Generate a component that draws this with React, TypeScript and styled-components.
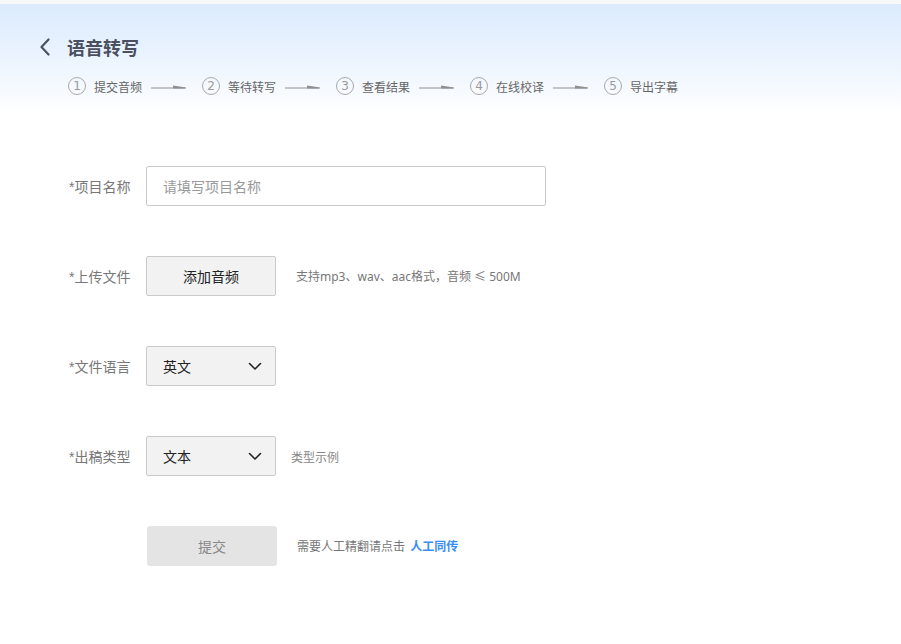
import styled, { createGlobalStyle } from "styled-components";
import { FC } from "react";

const GlobalStyle = createGlobalStyle`
  html, body {
    margin: 0;
    padding: 0;
    background: #fff;
    font-family: "Liberation Sans", "Noto Sans CJK SC", sans-serif;
  }
`;

const steps = ["提交音频", "等待转写", "查看结果", "在线校译", "导出字幕"];

const Chevron: FC = () => (
  <svg width="14" height="18" viewBox="0 0 14 18">
    <path d="M10.5 1.5 L3.5 9 L10.5 16.5" fill="none" stroke="#4b5262" strokeWidth="2.2" strokeLinecap="round" strokeLinejoin="round" />
  </svg>
);

const Arrow: FC = () => (
  <svg width="36" height="6" viewBox="0 0 36 6">
    <line x1="0" y1="4" x2="34" y2="4" stroke="#8f8f8f" strokeWidth="1.2" />
    <polygon points="22,1.6 35,3.6 35,4.4 22,4.4" fill="#8f8f8f" />
  </svg>
);

const DownArrow: FC = () => (
  <svg width="14" height="9" viewBox="0 0 14 9">
    <path d="M1.5 1.5 L7 7 L12.5 1.5" fill="none" stroke="#222" strokeWidth="1.6" strokeLinecap="round" strokeLinejoin="round" />
  </svg>
);

const App: FC = () => {
  return (
    <>
      <GlobalStyle />
      <Page>
        <TopStrip />
        <Header>
          <TitleRow>
            <BackBtn>
              <Chevron />
            </BackBtn>
            <Title>语音转写</Title>
          </TitleRow>
          <Steps>
            {steps.map((s, i) => (
              <Step key={s}>
                <StepNum>{i + 1}</StepNum>
                <StepText>{s}</StepText>
                {i < steps.length - 1 && (
                  <ArrowWrap>
                    <Arrow />
                  </ArrowWrap>
                )}
              </Step>
            ))}
          </Steps>
        </Header>

        <Form>
          <Row>
            <Label>*项目名称</Label>
            <TextInput placeholder="请填写项目名称" />
          </Row>
          <Row>
            <Label>*上传文件</Label>
            <GrayButton>添加音频</GrayButton>
            <Hint>支持mp3、wav、aac格式，音频 ≤ 500M</Hint>
          </Row>
          <Row>
            <Label>*文件语言</Label>
            <Select>
              <span>英文</span>
              <DownArrow />
            </Select>
          </Row>
          <Row>
            <Label>*出稿类型</Label>
            <Select>
              <span>文本</span>
              <DownArrow />
            </Select>
            <Example>类型示例</Example>
          </Row>
          <Row>
            <Label />
            <SubmitButton>提交</SubmitButton>
            <Hint $gap={20}>
              需要人工精翻请点击 <LinkText>人工同传</LinkText>
            </Hint>
          </Row>
        </Form>
      </Page>
    </>
  );
};

export default App;

const Page = styled.div`
  width: 901px;
  min-height: 644px;
  background: #fff;
`;

const TopStrip = styled.div`
  height: 4px;
  background: #f8f8f9;
`;

const Header = styled.div`
  height: 112px;
  padding: 32px 0 0 38px;
  box-sizing: border-box;
  background: linear-gradient(to bottom, #dbebfd 0%, #eaf3fe 45%, #ffffff 100%);
`;

const TitleRow = styled.div`
  display: flex;
  align-items: center;
  height: 22px;
`;

const BackBtn = styled.div`
  display: flex;
  align-items: center;
  width: 29px;
`;

const Title = styled.h1`
  margin: 0;
  font-size: 18px;
  font-weight: bold;
  color: #4a5060;
  font-family: "Noto Sans CJK SC", sans-serif;
  line-height: 22px;
`;

const Steps = styled.div`
  display: flex;
  align-items: center;
  margin: 18px 0 0 30px;
  height: 20px;
`;

const Step = styled.div`
  display: flex;
  align-items: center;
  width: 134px;
`;

const StepNum = styled.span`
  width: 16px;
  height: 16px;
  border: 1px solid #a9a9a9;
  border-radius: 50%;
  display: flex;
  align-items: center;
  justify-content: center;
  font-size: 12px;
  color: #9a9a9a;
  font-family: "DejaVu Sans", sans-serif;
  box-sizing: content-box;
`;

const StepText = styled.span`
  margin-left: 8px;
  font-size: 12px;
  color: #666;
  font-family: "Noto Sans CJK SC", sans-serif;
`;

const ArrowWrap = styled.span`
  display: flex;
  margin-left: 9px;
  margin-top: 1px;
`;

const Form = styled.div`
  padding: 50px 0 0 69px;
  display: flex;
  flex-direction: column;
  gap: 50px;
`;

const Row = styled.div`
  display: flex;
  align-items: center;
  height: 40px;
`;

const Label = styled.label`
  width: 77px;
  font-size: 14px;
  color: #777;
  font-family: "Liberation Sans", "Noto Sans CJK SC", sans-serif;
`;

const TextInput = styled.input`
  width: 400px;
  height: 40px;
  box-sizing: border-box;
  border: 1px solid #cacaca;
  border-radius: 2px;
  padding: 0 16px;
  font-size: 14px;
  font-family: "Noto Sans CJK SC", sans-serif;
  outline: none;
  &::placeholder {
    color: #999;
  }
`;

const GrayButton = styled.div`
  width: 130px;
  height: 40px;
  box-sizing: border-box;
  border: 1px solid #cacaca;
  border-radius: 2px;
  background: #f2f2f2;
  display: flex;
  align-items: center;
  justify-content: center;
  font-size: 14px;
  color: #222;
  font-family: "Noto Sans CJK SC", sans-serif;
`;

const Select = styled.div`
  width: 130px;
  height: 40px;
  box-sizing: border-box;
  border: 1px solid #cacaca;
  border-radius: 2px;
  background: #f2f2f2;
  display: flex;
  align-items: center;
  justify-content: space-between;
  padding: 0 13px 0 16px;
  font-size: 14px;
  color: #222;
  font-family: "Noto Sans CJK SC", sans-serif;
`;

const Hint = styled.span<{ $gap?: number }>`
  margin-left: ${(p) => p.$gap ?? 20}px;
  font-size: 12px;
  color: #777;
  font-family: "Noto Sans", "Noto Sans CJK SC", sans-serif;
`;

const Example = styled.span`
  margin-left: 15px;
  font-size: 12px;
  color: #888;
  font-family: "Noto Sans CJK SC", sans-serif;
`;

const SubmitButton = styled.div`
  width: 130px;
  height: 40px;
  margin-left: 1px;
  border-radius: 3px;
  background: #e4e4e4;
  display: flex;
  align-items: center;
  justify-content: center;
  font-size: 14px;
  color: #888;
  font-family: "Noto Sans CJK SC", sans-serif;
`;

const LinkText = styled.span`
  color: #3a8ef6;
  font-weight: bold;
  margin-left: 2px;
`;
